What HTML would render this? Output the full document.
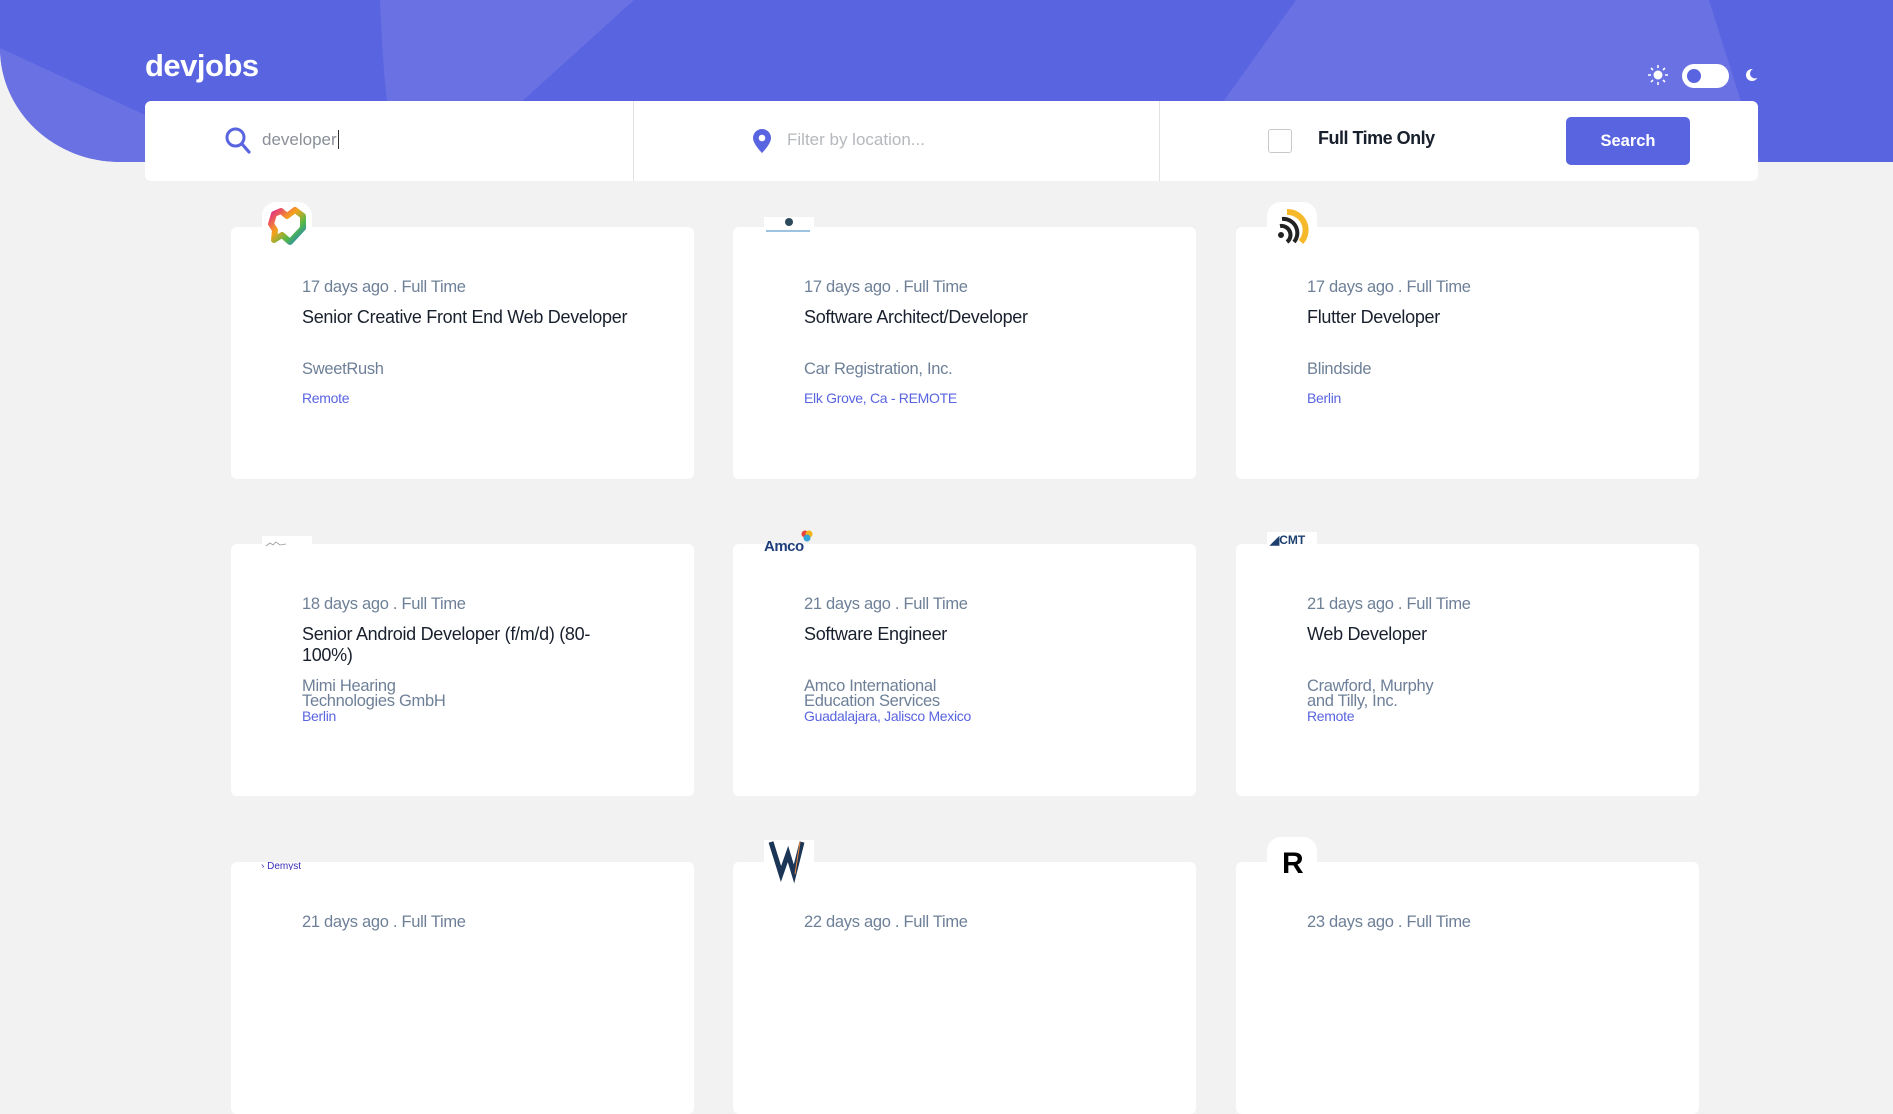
<!DOCTYPE html>
<html><head><meta charset="utf-8"><style>
*{margin:0;padding:0;box-sizing:border-box}
body{width:1893px;height:936px;overflow:hidden;background:#f2f2f2;font-family:"Liberation Sans",sans-serif;position:relative}
.hdr{position:absolute;left:0;top:0;width:1893px;height:162px;background:#5964e0;border-bottom-left-radius:120px 114px;overflow:hidden}
.logo{position:absolute;left:145px;top:48px;color:#fff;font-weight:bold;font-size:31px;letter-spacing:-0.5px}
.bar{position:absolute;left:145px;top:101px;width:1613px;height:80px;background:#fff;border-radius:6px}
.div{position:absolute;top:0;width:1px;height:80px;background:#e2e2e2}
.card{position:absolute;width:463px;height:252px;background:#fff;border-radius:6px}
.lg{position:absolute;left:31px;top:-25px;width:50px;height:50px;border-radius:14px;background:#fff;overflow:hidden}
.meta{position:absolute;left:71px;top:51px;font-size:16.5px;color:#6e8098;letter-spacing:-0.3px}
.ttl{position:absolute;left:71px;top:80px;width:334px;font-size:18px;line-height:21px;color:#19202d;letter-spacing:-0.3px}
.co{position:absolute;left:71px;top:134px;width:162px;font-size:16.5px;line-height:15px;color:#6e8098;letter-spacing:-0.3px}
.co .loc{display:block;font-size:14px;color:#5964e0;line-height:15px;white-space:nowrap}
.co .n{display:block;min-height:30px;padding-top:1px}
.co .n2{display:block;padding-top:1px}
</style></head><body>
<div class="hdr">
<svg width="1893" height="162" style="position:absolute;left:0;top:0">
<path d="M380 0 L634 0 L455 162 L400 162 Q385 130 380 0Z" fill="#6a71e3"/>
<path d="M1296 0 L1709 0 L1760 162 L1180 162Z" fill="#6a71e3"/>
<path d="M0 48 L145 115 L145 162 L0 162Z" fill="#6a71e3"/>
</svg>
<div class="logo">devjobs</div>
<svg style="position:absolute;left:1648px;top:65px" width="20" height="20" viewBox="0 0 20 20"><circle cx="10" cy="10" r="4.5" fill="#fff"/><g stroke="#fff" stroke-width="1.6"><path d="M10 0v3M10 17v3M0 10h3M17 10h3M3 3l2 2M15 15l2 2M3 17l2-2M15 5l2-2"/></g></svg>
<div style="position:absolute;left:1682px;top:64px;width:47px;height:24px;border-radius:12px;background:#fff"><div style="position:absolute;left:5px;top:5px;width:14px;height:14px;border-radius:7px;background:#5964e0"></div></div>
<svg style="position:absolute;left:1745px;top:67px" width="14" height="16" viewBox="0 0 14 16"><circle cx="7" cy="8" r="6" fill="#fff"/><circle cx="10" cy="6.5" r="5" fill="#5964e0"/></svg>
</div>
<div class="bar">
<svg style="position:absolute;left:80px;top:26px" width="26" height="28" viewBox="0 0 26 28"><circle cx="10.5" cy="10.5" r="8.5" fill="none" stroke="#5964e0" stroke-width="3"/><path d="M17 17 L24 25" stroke="#5964e0" stroke-width="3.2" stroke-linecap="round"/></svg>
<div style="position:absolute;left:117px;top:29px;font-size:17px;color:#8a8f98">developer<span style="border-left:1px solid #333;margin-left:1px"></span></div>
<div class="div" style="left:488px"></div>
<svg style="position:absolute;left:608px;top:28px" width="18" height="24" viewBox="0 0 18 24"><path d="M9 0C4 0 0 4 0 9c0 6 9 15 9 15s9-9 9-15C18 4 14 0 9 0z" fill="#5964e0"/><circle cx="9" cy="9" r="3.3" fill="#fff"/></svg>
<div style="position:absolute;left:642px;top:29px;font-size:17px;color:#b5b8bd">Filter by location...</div>
<div class="div" style="left:1014px"></div>
<div style="position:absolute;left:1123px;top:28px;width:24px;height:24px;border:1px solid #c9c9cc;border-radius:3px"></div>
<div style="position:absolute;left:1173px;top:27px;font-size:18px;font-weight:bold;color:#19202d;letter-spacing:-0.5px">Full Time Only</div>
<div style="position:absolute;left:1421px;top:16px;width:124px;height:48px;border-radius:5px;background:#5964e0;color:#fff;font-weight:bold;font-size:16.5px;text-align:center;line-height:48px">Search</div>
</div>

<div class="card" style="left:231px;top:227px"><div class="lg"><svg width="50" height="50" viewBox="0 0 50 50"><path d="M25 14 L33 8 L41 14 L41 26 L28 40 L20 33 L12 38 L13 28 L9 22 L12 12 L19 9Z" fill="none" stroke="url(#g1)" stroke-width="6" stroke-linejoin="round"/><defs><linearGradient id="g1" x1="0" y1="0" x2="1" y2="1"><stop offset="0" stop-color="#e0248d"/><stop offset=".4" stop-color="#f7a21b"/><stop offset=".7" stop-color="#53b848"/><stop offset="1" stop-color="#1f7bd3"/></linearGradient></defs></svg></div>
<div class="meta">17 days ago . Full Time</div><div class="ttl">Senior Creative Front End Web Developer</div><div class="co"><span class="n">SweetRush</span><span class="loc">Remote</span></div></div>
<div class="card" style="left:733px;top:227px"><div class="lg" style="border-radius:0;height:25px;top:-10px"><svg width="50" height="20"><circle cx="25" cy="5" r="4" fill="#2c4a5a"/><rect x="2" y="13" width="44" height="2" fill="#9ec3e0"/></svg></div>
<div class="meta">17 days ago . Full Time</div><div class="ttl">Software Architect/Developer</div><div class="co"><span class="n" style="white-space:nowrap">Car Registration, Inc.</span><span class="loc">Elk Grove, Ca - REMOTE</span></div></div>
<div class="card" style="left:1236px;top:227px"><div class="lg"><svg width="50" height="50" viewBox="0 0 50 50"><path d="M20 10 A18 18 0 0 1 34 40" fill="none" stroke="#f6b92b" stroke-width="6"/><path d="M15 17 A14 14 0 0 1 27 40" fill="none" stroke="#222" stroke-width="4"/><path d="M13 24 A9 9 0 0 1 20 40" fill="none" stroke="#222" stroke-width="4"/><circle cx="14" cy="33" r="3" fill="#222"/></svg></div>
<div class="meta">17 days ago . Full Time</div><div class="ttl">Flutter Developer</div><div class="co"><span class="n">Blindside</span><span class="loc">Berlin</span></div></div>

<div class="card" style="left:231px;top:544px"><div class="lg" style="border-radius:0;height:12px;top:-8px"><svg width="50" height="12"><path d="M4 9 L8 6 L11 8 L14 5 L18 8 L24 7" stroke="#999" fill="none" stroke-width=".8"/></svg></div>
<div class="meta">18 days ago . Full Time</div><div class="ttl">Senior Android Developer (f/m/d) (80-100%)</div><div class="co"><span class="n2">Mimi Hearing Technologies GmbH</span><span class="loc">Berlin</span></div></div>
<div class="card" style="left:733px;top:544px"><div style="position:absolute;left:31px;top:-14px;width:60px;height:40px"><span style="position:absolute;left:0;top:8px;font-size:15px;font-weight:bold;color:#1e3d7a;letter-spacing:-0.5px">Amco</span><svg style="position:absolute;left:37px;top:0" width="12" height="12"><circle cx="4" cy="4" r="3.5" fill="#e8443a"/><circle cx="8" cy="4" r="3.5" fill="#f2b51c"/><circle cx="6" cy="8" r="3.5" fill="#38a3d9"/></svg></div>
<div class="meta">21 days ago . Full Time</div><div class="ttl">Software Engineer</div><div class="co"><span class="n2">Amco International Education Services</span><span class="loc">Guadalajara, Jalisco Mexico</span></div></div>
<div class="card" style="left:1236px;top:544px"><div class="lg" style="border-radius:0;height:22px;top:-12px"><span style="position:absolute;left:3px;top:1px;font-size:12px;font-weight:bold;color:#1d3f6e">&#9698;CMT</span></div>
<div class="meta">21 days ago . Full Time</div><div class="ttl">Web Developer</div><div class="co"><span class="n2">Crawford, Murphy<br>and Tilly, Inc.</span><span class="loc">Remote</span></div></div>

<div class="card" style="left:231px;top:862px"><div class="lg" style="background:transparent;height:14px;top:-6px;width:70px;left:30px"><span style="font-size:10px;color:#3a2fb8">&#8250; Demyst</span></div>
<div class="meta">21 days ago . Full Time</div></div>
<div class="card" style="left:733px;top:862px"><div class="lg" style="border-radius:0;top:-22px;height:46px"><svg width="50" height="46"><path d="M7 2 L17 34 L24 14 L30 34 L38 2" fill="none" stroke="#1b3557" stroke-width="5"/><path d="M36 2 L31 34" stroke="#f08a3b" stroke-width="1"/></svg></div>
<div class="meta">22 days ago . Full Time</div></div>
<div class="card" style="left:1236px;top:862px"><div class="lg"><span style="position:absolute;left:15px;top:10px;font-size:30px;font-weight:bold;color:#000">R</span></div>
<div class="meta">23 days ago . Full Time</div></div>
</body></html>
